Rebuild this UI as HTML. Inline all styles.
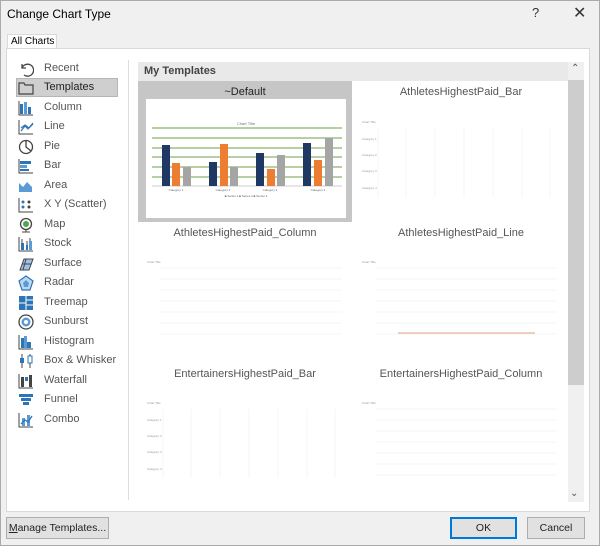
<!DOCTYPE html>
<html><head><meta charset="utf-8"><style>
*{margin:0;padding:0;box-sizing:border-box}
body{width:600px;height:546px;background:#f0f0f0;font-family:"Liberation Sans",sans-serif;position:relative;overflow:hidden;color:#000;white-space:nowrap}
.abs{position:absolute}
.item{position:absolute;left:16px;width:102px;height:19px;font-size:11px;color:#555;line-height:19px;padding-left:28px}
.item svg{position:absolute;left:2px;top:2px}
.ttl{position:absolute;font-size:11px;color:#555;text-align:center;width:214px}
.btn{position:absolute;top:517px;height:22px;border:1px solid #adadad;background:#e1e1e1;font-size:10.5px;text-align:center;line-height:20px;color:#222}
</style></head><body>
<div class="abs" style="left:0;top:0;width:600px;height:546px;border:1px solid #aaa"></div>
<div class="abs" style="left:7px;top:7px;font-size:12px;color:#000">Change Chart Type</div>
<div class="abs" style="left:532px;top:5px;font-size:13px;color:#333">?</div>
<div class="abs" style="left:573px;top:3px;font-size:16px;color:#333">✕</div>
<div class="abs" style="left:7px;top:34px;width:50px;height:15px;background:#fff;border:1px solid #d9d9d9;border-bottom:none;font-size:10px;line-height:14px;padding-left:3px">All Charts</div>
<div class="abs" style="left:6px;top:48px;width:584px;height:464px;background:#fff;border:1px solid #d9d9d9"></div>
<div class="abs" style="left:128px;top:60px;width:1px;height:440px;background:#ddd"></div>
<div class="abs" style="left:16px;top:78px;width:102px;height:19px;background:#cfcfcf;border:1px solid #b5b5b5"></div>

<div class="item" style="top:59px"><svg width="16" height="16"><path d="M4 3v4h4M4 7a6 6 0 1 1 2 7" fill="none" stroke="#444" stroke-width="1.3"/></svg>Recent</div>
<div class="item" style="top:78px;color:#222"><svg width="16" height="16"><path d="M1 3h5l1 2h8v9H1z" fill="none" stroke="#444" stroke-width="1.2"/></svg>Templates</div>
<div class="item" style="top:98px"><svg width="16" height="16"><rect x="2" y="4" width="3" height="10" fill="#2e75b6"/><rect x="6" y="2" width="3" height="12" fill="#5b9bd5"/><rect x="10" y="7" width="3" height="7" fill="#2e75b6"/><path d="M1 1v14h14" fill="none" stroke="#444"/></svg>Column</div>
<div class="item" style="top:117px"><svg width="16" height="16"><path d="M1 1v14h14" fill="none" stroke="#444"/><path d="M3 12l4-5 3 3 5-6M3 9l4-3 4 3 4-4" fill="none" stroke="#2e75b6" stroke-width="1.2"/></svg>Line</div>
<div class="item" style="top:137px"><svg width="16" height="16"><circle cx="8" cy="8" r="6.5" fill="none" stroke="#444" stroke-width="1.3"/><path d="M8 1.5V8l5 4" fill="none" stroke="#444" stroke-width="1.3"/></svg>Pie</div>
<div class="item" style="top:156px"><svg width="16" height="16"><path d="M1 1v14h14" fill="none" stroke="#444"/><rect x="2" y="3" width="11" height="3" fill="#2e75b6"/><rect x="2" y="7" width="7" height="3" fill="#5b9bd5"/><rect x="2" y="11" width="9" height="2" fill="#2e75b6"/></svg>Bar</div>
<div class="item" style="top:176px"><svg width="16" height="16"><path d="M1 14V5l4 4 4-5 5 5v5z" fill="#5b9bd5"/></svg>Area</div>
<div class="item" style="top:195px"><svg width="16" height="16"><path d="M1 1v14h14" fill="none" stroke="#444"/><circle cx="5" cy="5" r="1.5" fill="#2e75b6"/><circle cx="5" cy="10" r="1.5" fill="#2e75b6"/><circle cx="11" cy="5" r="1.5" fill="#444"/><circle cx="11" cy="10" r="1.5" fill="#444"/></svg>X Y (Scatter)</div>
<div class="item" style="top:215px"><svg width="16" height="16"><circle cx="8" cy="7" r="5.5" fill="#fff" stroke="#444" stroke-width="1.3"/><circle cx="8" cy="7" r="3" fill="#4ca64c"/><path d="M4 15h8M8 12v3" stroke="#444"/></svg>Map</div>
<div class="item" style="top:234px"><svg width="16" height="16"><path d="M1 1v14h14" fill="none" stroke="#444"/><rect x="3" y="7" width="3" height="7" fill="#2e75b6"/><rect x="8" y="9" width="2" height="5" fill="#2e75b6"/><rect x="11" y="5" width="3" height="9" fill="#5b9bd5"/><path d="M4 3v4M9 5v4M12 2v3" stroke="#444"/></svg>Stock</div>
<div class="item" style="top:254px"><svg width="16" height="16"><path d="M2 14l4-11h9l-4 11z" fill="#9dc3e6" stroke="#444"/><path d="M4 8h9M8 3l-3 11" stroke="#444"/></svg>Surface</div>
<div class="item" style="top:273px"><svg width="16" height="16"><path d="M8 1l7 5-3 9H4L1 6z" fill="#bdd7ee" stroke="#2e75b6" stroke-width="1.2"/><path d="M8 5l3 3-1 4H6L5 8z" fill="#5b9bd5"/></svg>Radar</div>
<div class="item" style="top:293px"><svg width="16" height="16"><rect x="1" y="1" width="14" height="14" fill="#2e75b6"/><path d="M8 1v14M1 8h7M8 5h7M8 10h7" stroke="#fff"/></svg>Treemap</div>
<div class="item" style="top:312px"><svg width="16" height="16"><circle cx="8" cy="8" r="7" fill="#fff" stroke="#444" stroke-width="1.3"/><circle cx="8" cy="8" r="4.5" fill="#5b9bd5"/><circle cx="8" cy="8" r="2" fill="#fff"/></svg>Sunburst</div>
<div class="item" style="top:332px"><svg width="16" height="16"><path d="M1 1v14h14" fill="none" stroke="#444"/><rect x="3" y="4" width="3" height="10" fill="#2e75b6"/><rect x="6" y="2" width="3" height="12" fill="#5b9bd5"/><rect x="9" y="8" width="4" height="6" fill="#2e75b6"/></svg>Histogram</div>
<div class="item" style="top:351px"><svg width="16" height="16"><path d="M4 1v14M12 1v14" stroke="#444"/><rect x="2" y="5" width="4" height="5" fill="#2e75b6"/><rect x="10" y="3" width="4" height="7" fill="#fff" stroke="#2e75b6"/></svg>Box &amp; Whisker</div>
<div class="item" style="top:371px"><svg width="16" height="16"><path d="M1 1v14h14" fill="none" stroke="#444"/><rect x="3" y="4" width="3" height="10" fill="#444"/><rect x="7" y="4" width="3" height="4" fill="#2e75b6"/><rect x="11" y="2" width="3" height="12" fill="#444"/></svg>Waterfall</div>
<div class="item" style="top:390px"><svg width="16" height="16"><rect x="1" y="2" width="14" height="3" fill="#2e75b6"/><rect x="3" y="6" width="10" height="3" fill="#2e75b6"/><rect x="5" y="10" width="6" height="3" fill="#2e75b6"/></svg>Funnel</div>
<div class="item" style="top:410px"><svg width="16" height="16"><path d="M1 1v14h14" fill="none" stroke="#444"/><rect x="4" y="6" width="3" height="8" fill="#5b9bd5"/><rect x="9" y="3" width="3" height="11" fill="#5b9bd5"/><path d="M3 12l4-4 3 2 4-6" fill="none" stroke="#2e75b6" stroke-width="1.3"/></svg>Combo</div>

<div class="abs" style="left:138px;top:62px;width:430px;height:19px;background:#e9e9e9;font-size:11px;font-weight:bold;color:#444;line-height:19px;padding-left:6px">My Templates</div>
<div class="abs" style="left:568px;top:62px;width:16px;height:440px;background:#f0f0f0"></div>
<div class="abs" style="left:568px;top:80px;width:16px;height:305px;background:#cdcdcd"></div>
<div class="abs" style="left:571px;top:63px;font-size:10px;color:#555">⌃</div>
<div class="abs" style="left:570px;top:488px;font-size:10px;color:#555">⌄</div>

<div class="abs" style="left:138px;top:81px;width:214px;height:141px;background:#c6c6c6"></div>
<div class="ttl" style="left:138px;top:86px;color:#222">~Default</div>
<div class="ttl" style="left:354px;top:86px">AthletesHighestPaid_Bar</div>
<div class="ttl" style="left:138px;top:227px">AthletesHighestPaid_Column</div>
<div class="ttl" style="left:354px;top:227px">AthletesHighestPaid_Line</div>
<div class="ttl" style="left:138px;top:368px">EntertainersHighestPaid_Bar</div>
<div class="ttl" style="left:354px;top:368px">EntertainersHighestPaid_Column</div>

<svg class="abs" style="left:0;top:0" width="600" height="546">
<rect x="146" y="99" width="200" height="119" fill="#fff"/>
<text x="246" y="125" font-size="4" fill="#777" text-anchor="middle" font-family="Liberation Sans">Chart Title</text>
<g stroke="#8cb369" stroke-width="1.3"><path d="M152 128H342M152 138H342M152 148H342M152 157H342M152 167H342M152 177H342"/></g>
<path d="M152 186H342" stroke="#ccc"/>
<g fill="#203864"><rect x="162" y="145" width="8" height="41"/><rect x="209" y="162" width="8" height="24"/><rect x="256" y="153" width="8" height="33"/><rect x="303" y="143" width="8" height="43"/></g>
<g fill="#ed7d31"><rect x="172" y="163" width="8" height="23"/><rect x="220" y="144" width="8" height="42"/><rect x="267" y="169" width="8" height="17"/><rect x="314" y="160" width="8" height="26"/></g>
<g fill="#a5a5a5"><rect x="183" y="167" width="8" height="19"/><rect x="230" y="167" width="8" height="19"/><rect x="277" y="155" width="8" height="31"/><rect x="325" y="138" width="8" height="48"/></g>
<g fill="#666" font-size="3" font-family="Liberation Sans" text-anchor="middle"><text x="176" y="191">Category 1</text><text x="223" y="191">Category 2</text><text x="270" y="191">Category 3</text><text x="318" y="191">Category 4</text><text x="246" y="197">■ Series 1 ■ Series 2 ■ Series 3</text></g>
<g fill="#999" font-size="3" font-family="Liberation Sans">
<text x="362" y="123">Chart Title</text><text x="362" y="140">Category 1</text><text x="362" y="156">Category 2</text><text x="362" y="172">Category 3</text><text x="362" y="189">Category 4</text>
<text x="147" y="263">Chart Title</text><text x="362" y="263">Chart Title</text><text x="147" y="404">Chart Title</text><text x="362" y="404">Chart Title</text>
<text x="147" y="421">Category 1</text><text x="147" y="437">Category 2</text><text x="147" y="453">Category 3</text><text x="147" y="470">Category 4</text>
</g>
<g stroke="#eee" stroke-width="0.6">
<path d="M378 128V197M406 128V197M435 128V197M464 128V197M493 128V197M522 128V197M550 128V197"/>
<path d="M163 409V478M191 409V478M220 409V478M249 409V478M278 409V478M307 409V478M335 409V478"/>
<path d="M160 268H342M160 279H342M160 290H342M160 301H342M160 312H342M160 323H342M160 334H342"/>
<path d="M375 268H557M375 279H557M375 290H557M375 301H557M375 312H557M375 323H557M375 334H557"/>
<path d="M375 409H557M375 420H557M375 431H557M375 442H557M375 453H557M375 464H557M375 475H557"/>
</g>
<path d="M398 333H535" stroke="#e0a080"/>
</svg>

<div class="btn" style="left:6px;width:103px"><u>M</u>anage Templates...</div>
<div class="btn" style="left:450px;width:67px;border:1px solid #0078d7;box-shadow:inset 0 0 0 1px #0078d7">OK</div>
<div class="btn" style="left:527px;width:58px">Cancel</div>
</body></html>
